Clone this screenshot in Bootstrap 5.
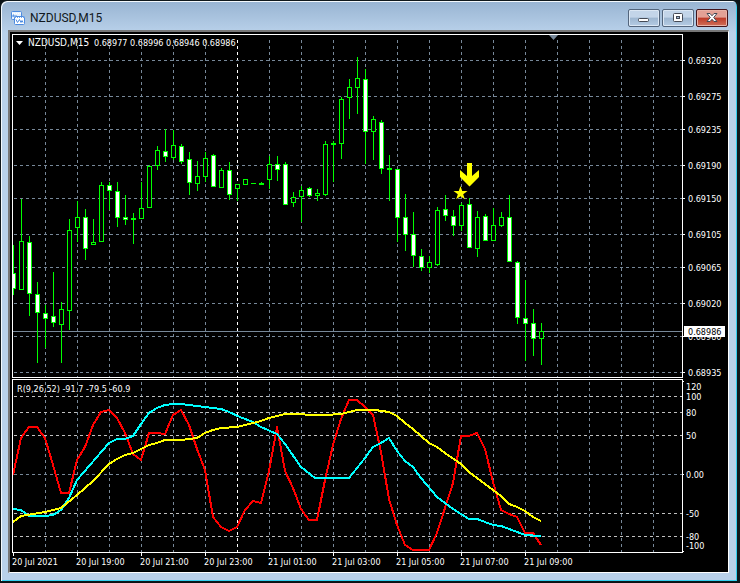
<!DOCTYPE html>
<html lang="en">
<head>
<meta charset="utf-8">
<meta name="viewport" content="width=device-width, initial-scale=1">
<title>NZDUSD,M15</title>
<link href="https://cdn.jsdelivr.net/npm/bootstrap@5.3.0/dist/css/bootstrap.min.css" rel="stylesheet">
<style>
body{background:#0a1216}
.win{background:linear-gradient(#98b4d2,#b9d1ea 32px);border:1px solid #10181c;border-right-width:3px;border-radius:7px 7px 0 0;box-shadow:inset 1px 1px 0 #f4f9fd,inset -1px -1px 0 #35d0f0;padding:1px 8px 8px 7px}
.title-bar{height:28px;padding:4px 1px 0 3px}
.title-bar h1{font:12px/18px Roboto,"Liberation Sans",sans-serif;color:#101820;margin-left:5px}
.caps{gap:2px}
.cap{width:32px;height:18px;border:1px solid #53657c;border-radius:2px;padding:0;background:linear-gradient(#c3d5e9 45%,#9db6d0 50%,#b5cce4);box-shadow:inset 0 0 0 1px #dbe7f4;display:flex;align-items:center;justify-content:center}
.cap-close{border-color:#43151c;background:linear-gradient(#e3a196 45%,#bd3a28 50%,#d0705a);box-shadow:inset 0 0 0 1px #e9b2a7}
.client{background:#000;border:1px solid #fff;border-top:2px solid #777;border-left:2px solid #777;padding:0}
.client svg{font-family:"DejaVu Sans Condensed","DejaVu Sans",sans-serif;font-size:9px;fill:#fff}
.client .symbol{font-size:10px}
.crisp{shape-rendering:crispEdges}
</style>
<script src="https://cdn.jsdelivr.net/npm/bootstrap@5.3.0/dist/js/bootstrap.bundle.min.js"></script>
</head>
<body>
<main class="win d-flex flex-column">
  <header class="title-bar d-flex align-items-center">
    <svg width="14" height="14" viewBox="0 0 14 14" aria-hidden="true"><rect x=".5" y=".5" width="10" height="8" rx="1" fill="#e8f2fd" stroke="#4c8be0"/><path d="M1 2.5h9" stroke="#fff" stroke-dasharray="1 1"/><path d="M2 6V4h1v2M5 7V4" stroke="#4c8be0" fill="none"/><rect x="3.500" y="5.500" width="10" height="8" rx="1" fill="#fff" stroke="#4c8be0"/><path d="M4 6.500h9" stroke="#70a5ec" stroke-dasharray="1 1"/><path d="M5 8.500l1.500 3 2-3 1.500 3 1-2 1 2" stroke="#4c8be0" fill="none"/></svg>
    <h1 class="mb-0 me-auto">NZDUSD,M15</h1>
    <div class="caps d-flex">
      <button class="cap" type="button" aria-label="Minimize"><svg width="12" height="12"><rect x=".5" y="6.500" width="10" height="3" rx="1" fill="#fff" stroke="#454a55"/></svg></button>
      <button class="cap" type="button" aria-label="Maximize"><svg width="12" height="12"><rect x="1.500" y="1.500" width="9" height="8" rx="1" fill="#fff" stroke="#454a55"/><rect x="4.500" y="4.500" width="3" height="2" fill="#9fb8d4" stroke="#454a55"/></svg></button>
      <button class="cap cap-close" type="button" aria-label="Close"><svg width="12" height="12"><path d="M1 1.500h3l2 2.300 2-2.300h3L7.700 5.500l3.300 4H8L6 7.300 4 9.500H1l3.300-4z" fill="#fff" stroke="#454a55"/></svg></button>
    </div>
  </header>
  <section class="client">
    <svg id="chart" class="d-block w-100 h-auto" viewBox="10 32 718 540" role="img" aria-label="NZDUSD 15 minute candlestick chart with oscillator">
      <g class="crisp" id="grid" fill="none"></g>
      <g class="crisp" id="candles" fill="#0f0"></g>
      <g class="crisp" id="lines" fill="none" stroke-width="2" stroke-linejoin="round"></g>
      <g class="crisp" fill="none" stroke="#fff"><path d="M12.500 34.500H682.500V377.500H12.500ZM12.500 379.500H682.500V552.500H12.500Z"/><path id="ticks"/></g>
      <path d="M549 35h9l-4.500 5z" fill="#778899"/>
      <path d="M16 41h7l-3.500 4z"/>
      <path d="M467 163h5v13l7-6v7l-9.500 9.500L460 177v-7l7 6z" fill="#ff0"/>
      <path d="M460.500 186l1.700 5h5.300l-4.300 3.200 1.600 5.100-4.300-3.100-4.300 3.100 1.600-5.100-4.300-3.200h5.300z" fill="#ff0"/>
      <text class="symbol" x="28" y="46">NZDUSD,M15</text>
      <text x="94" y="46">0.68977 0.68996 0.68946 0.68986</text>
      <text x="17" y="392">R(9,26,52) -91.7 -79.5 -60.9</text>
      <g id="labels"></g>
      <rect x="684" y="326" width="41" height="11"/>
      <text x="688" y="335" fill="#000">0.68986</text>
    </svg>
  </section>
</main>
<script>
const el = id => document.getElementById(id);
const prices = [[60,'0.69320'],[96,'0.69275'],[129,'0.69235'],[165,'0.69190'],[198,'0.69150'],[234,'0.69105'],[267,'0.69065'],[303,'0.69020'],[336,'0.68980'],[372,'0.68935']];
const times = ['20 Jul 2021','20 Jul 19:00','20 Jul 21:00','20 Jul 23:00','21 Jul 01:00','21 Jul 03:00','21 Jul 05:00','21 Jul 07:00','21 Jul 09:00'];
const levels = [[390,'120'],[400,'100'],[416,'80'],[439,'50'],[478,'0.00'],[517,'-50'],[540,'-80'],[549,'-100']];

let grid = '';
for (let x = 45; x < 682; x += 32)
  grid += `<path d="M${x}.5 40V377M${x}.5 382V552" stroke="${x === 237 ? '#fff' : '#778899'}" stroke-dasharray="3 3"/>`;
prices.forEach(p => grid += `<path d="M14 ${p[0]}.5H682" stroke="#778899" stroke-dasharray="3 3"/>`);
[396,412,435,474,513,536].forEach(y => grid += `<path d="M14 ${y}.5H682" stroke="${y === 474 ? '#778899' : '#c0c0c0'}" stroke-dasharray="3 3"/>`);
grid += '<path d="M13 331.500H682" stroke="#778899"/>';
el('grid').innerHTML = grid;

/* high, body top, body bottom, low, falling (1) or rising (0); one bar every 8 units */
const bars = [[245,273,288,294,1],[199,241,289,289,0],[236,242,293,315,1],[282,294,312,362,1],[305,313,318,347,1],[272,316,322,326,1],[302,309,324,362,0],[219,230,310,329,0],[201,217,227,241,0],[209,217,248,259,1],[219,242,244,244,0],[182,185,241,241,0],[182,185,190,209,1],[182,191,217,226,1],[195,217,219,224,1],[213,218,219,243,0],[182,208,218,218,0],[165,166,207,207,0],[146,150,165,169,0],[129,151,156,161,1],[130,145,157,159,0],[144,146,161,163,1],[152,159,182,194,1],[161,176,183,190,0],[152,158,176,181,0],[154,155,186,186,1],[168,170,187,187,0],[162,170,194,199,1],[184,184,188,200,0],[179,179,184,184,0],[183,183,183,183,0],[182,183,184,184,0],[156,164,179,188,0],[156,164,169,180,1],[162,164,204,204,1],[192,197,202,206,0],[186,190,196,221,0],[187,188,195,196,1],[189,193,195,200,0],[141,144,194,195,0],[141,143,144,181,0],[97,99,143,158,0],[79,87,97,118,0],[57,78,87,113,0],[69,79,131,163,1],[116,119,131,159,0],[120,122,168,173,1],[155,168,169,200,0],[169,169,217,241,1],[194,217,234,250,1],[212,234,255,266,1],[249,256,267,270,1],[256,262,267,272,0],[207,210,264,265,0],[195,209,215,220,1],[210,216,225,235,1],[203,205,225,230,0],[198,204,247,247,1],[211,217,248,256,0],[214,216,240,240,1],[208,225,240,240,0],[212,217,225,226,0],[195,217,261,261,1],[261,262,317,323,1],[280,318,323,360,1],[309,323,338,355,1],[323,331,338,364,0]];
const box = (x, y, w, h, fill) => `<rect x="${x}" y="${y}" width="${w}" height="${h}"${fill ? ` fill="${fill}"` : ''}/>`;
el('candles').innerHTML = bars.map(([h,t,b,l,down], i) => {
  const x = 13 + i * 8, left = Math.max(x - 2, 12), w = x + 3 - left;
  return box(x, h, 1, l - h + 1) + box(left, t, w, b - t + 1)
    + (b - t > 1 ? box(left + 1, t + 1, w - 2, b - t - 1, down ? '#fff' : '#000') : '');
}).join('');

const red = [475,438,427,427,438,465,493,493,460,447,425,412,410,418,433,454,460,433,433,434,415,410,425,449,470,517,527,531,527,510,501,503,471,427,471,488,509,520,520,480,445,419,400,400,407,415,452,499,525,545,550,550,550,533,508,483,436,436,433,449,482,510,514,517,533,533,545].map((y, i) => `${13 + i * 8},${y}`).join(' ');
const cyan = '13,509 21,510 29,516 45,516 53,515 61,510 69,498 77,480 109,443 117,439 125,439 133,436 141,424 149,413 157,408 165,405 173,404 181,404 189,405 221,409 229,412 240,417 253,422 261,427 277,434 285,444 301,467 315,478 349,478 365,458 373,447 381,443 389,438 397,451 405,461 413,467 421,478 437,497 445,503 453,509 461,514 469,519 477,519 493,525 501,526 509,529 517,532 525,535 541,536';
const yellow = '13,522 21,516 45,512 61,508 77,495 93,481 109,464 117,459 125,455 133,453 149,445 157,443 165,440 181,440 197,438 205,433 213,430 221,428 237,427 253,423 261,421 269,418 285,414 301,414 309,415 325,415 341,414 349,412 357,410 375,410 389,412 397,416 405,423 413,429 429,443 437,447 445,453 461,464 469,472 477,478 501,496 509,504 517,507 525,511 533,517 541,521';
el('lines').innerHTML = [[red,'#f00'],[cyan,'#0ff'],[yellow,'#ff0']].map(([p, c]) => `<polyline points="${p}" stroke="${c}"/>`).join('');

el('ticks').setAttribute('d', prices.map(p => `M683 ${p[0]}.5h2`).join('') + [381,474,551].map(y => `M683 ${y}.5h1`).join('') + times.map((t, i) => `M${13 + i * 64}.5 553v3`).join(''));
el('labels').innerHTML =
  prices.map(p => `<text x="688" y="${p[0] + 4}">${p[1]}</text>`).join('') +
  levels.map(l => `<text x="686" y="${l[0]}">${l[1]}</text>`).join('') +
  times.map((t, i) => `<text x="${12 + i * 64}" y="565">${t}</text>`).join('');
</script>
</body>
</html>
